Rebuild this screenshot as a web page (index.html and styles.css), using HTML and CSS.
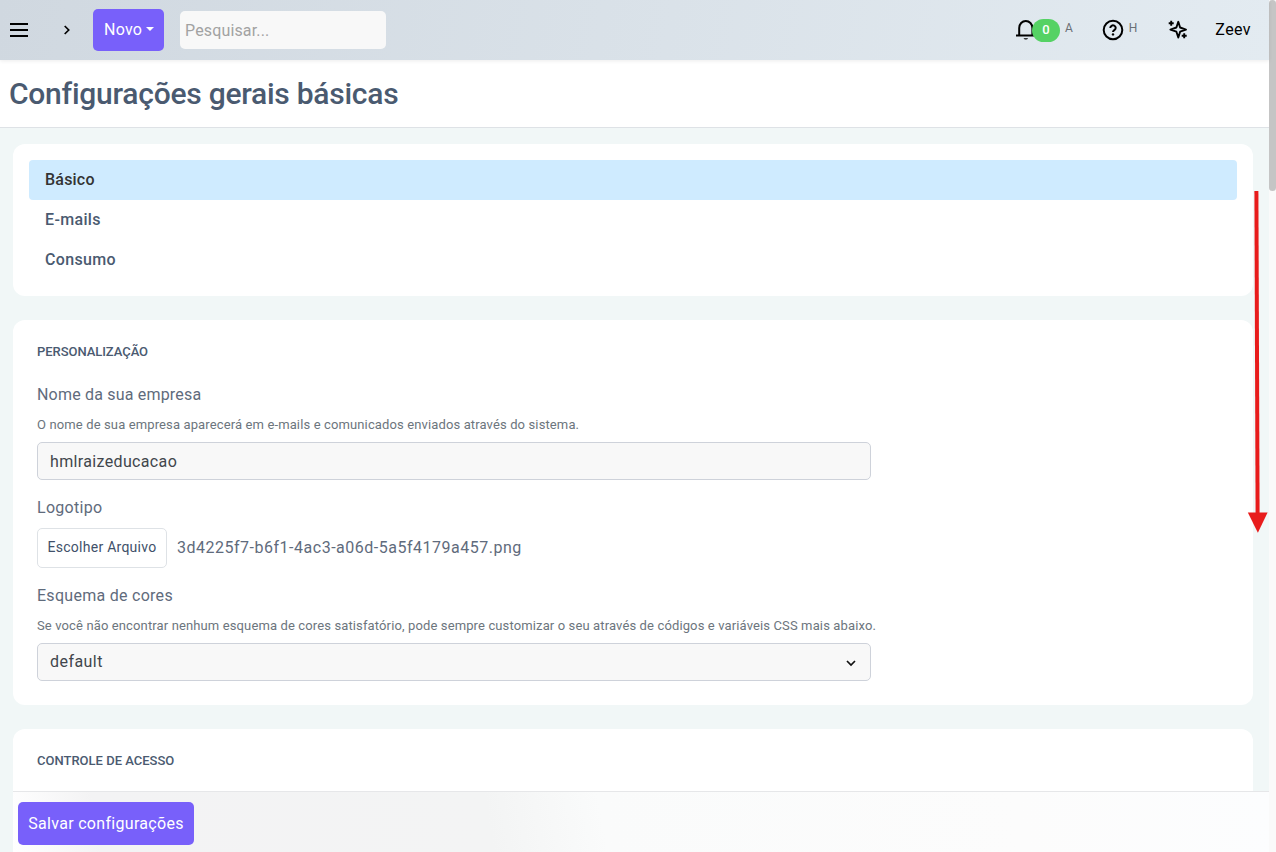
FILE: index.html
```
<!DOCTYPE html>
<html lang="pt-BR">
<head>
<meta charset="utf-8">
<title>Configurações gerais básicas</title>
<link rel="stylesheet" href="styles.css">
</head>
<body>
<div class="window">
  <div class="app">
    <header class="topbar">
      <svg class="menu-icon" width="20" height="16" viewBox="0 0 20 16"><path d="M1 2h18M1 8h18M1 14h18"/></svg>
      <svg class="expand-icon" width="8" height="12" viewBox="0 0 8 12"><path d="M1.7 2l4 4-4 4"/></svg>
      <button class="btn btn-new">Novo<span class="caret"></span></button>
      <input class="search" type="text" placeholder="Pesquisar...">
      <div class="topbar-right">
        <div class="alerts">
          <svg class="icon" width="20" height="22" viewBox="0 0 20 22"><path d="M0 16.5h20M3.2 16.2V9a6.6 7 0 0 1 13.2 0v7.2"/><path d="M7.5 19.3a2.5 2 0 0 0 4.6 0z" fill="#000" stroke="none"/></svg>
          <span class="badge">0</span>
          <span class="hotkey">A</span>
        </div>
        <div class="help">
          <svg class="icon" width="22" height="22" viewBox="0 0 22 22"><circle cx="11" cy="11" r="9.3"/><path d="M8.3 8.9a2.7 2.5 0 1 1 4.3 2c-1 .7-1.6 1.1-1.6 2.1"/><circle cx="11" cy="15.4" r="1.2" fill="#000" stroke="none"/></svg>
          <span class="hotkey">H</span>
        </div>
        <svg class="icon sparkle" width="20" height="20" viewBox="0 0 20 20"><path d="M10.3 1.8l1.8 5.7 5.9 2.1-5.9 2.1-1.8 5.8-1.9-5.8-6-2.1 6-2.1z"/><path d="M3.2.7v5M.7 3.2h5M16.2 13.2v5M13.7 15.7h5"/></svg>
        <span class="user">Zeev</span>
      </div>
    </header>
    <div class="page-head"><h1>Configurações gerais básicas</h1></div>
    <main class="content">
      <nav class="card tabs">
        <a class="tab active">Básico</a>
        <a class="tab">E-mails</a>
        <a class="tab">Consumo</a>
      </nav>
      <section class="card panel">
        <h2>PERSONALIZAÇÃO</h2>
        <div class="field">
          <label class="label-name">Nome da sua empresa</label>
          <p class="hint">O nome de sua empresa aparecerá em e-mails e comunicados enviados através do sistema.</p>
          <div class="control">hmlraizeducacao</div>
        </div>
        <div class="field">
          <label>Logotipo</label>
          <div class="file"><button class="btn-file">Escolher Arquivo</button><span class="file-name">3d4225f7-b6f1-4ac3-a06d-5a5f4179a457.png</span></div>
        </div>
        <div class="field">
          <label>Esquema de cores</label>
          <p class="hint">Se você não encontrar nenhum esquema de cores satisfatório, pode sempre customizar o seu através de códigos e variáveis CSS mais abaixo.</p>
          <div class="control select">default<svg width="12" height="8" viewBox="0 0 12 8"><path d="M2 2l4 4 4-4"/></svg></div>
        </div>
      </section>
      <section class="card panel panel-access">
        <h2>CONTROLE DE ACESSO</h2>
      </section>
    </main>
    <footer class="actions"><button class="btn btn-save">Salvar configurações</button></footer>
  </div>
  <div class="scrollbar"><div class="thumb"></div></div>
</div>
<svg class="scroll-arrow" width="22" height="342" viewBox="0 0 22 342"><path d="M9.4 0L10.6 324" stroke="#e81c1c" stroke-width="4"/><path d="M.8 321.5h19.8l-9.7 20.3z" fill="#e81c1c"/></svg>
</body>
</html>
```
FILE: styles.css
```
* { box-sizing: border-box; }
body { margin: 0; font-family: Roboto, "Liberation Sans", sans-serif; font-size: 16px; color: #5f6b7c; overflow: hidden; }
button, input { font-family: inherit; }

.window { display: grid; grid-template-columns: 1fr 7px; height: 852px; }
.app { display: flex; flex-direction: column; height: 852px; min-width: 0; background: #f1f7f7; }
.scrollbar { background: #fafafa; }
.thumb { height: 191px; border-radius: 4px; background: #c5c5c5; }

.topbar { display: flex; align-items: center; height: 60px; flex: none; padding: 0 18px 0 9px; background: linear-gradient(100deg, #d0d8e0, #e3ebf1); box-shadow: 0 1px 4px rgba(0, 0, 0, .08); z-index: 1; }
.menu-icon, .expand-icon, .icon { fill: none; stroke: #000; stroke-width: 2; flex: none; }
.menu-icon { stroke-width: 1.8; }
.expand-icon { margin-left: 34px; stroke-width: 1.7; }
.btn { border: 0; border-radius: 5px; background: #7860fa; color: #fff; font-size: 16px; }
.btn-new { display: flex; align-items: center; width: 71px; height: 42px; margin-left: 22px; padding: 0 0 2px 11px; letter-spacing: .25px; }
.caret { margin-left: 4px; border: 4px solid transparent; border-top-color: #fff; border-bottom: 0; }
.search { width: 206px; height: 38px; margin-left: 16px; padding: 1px 6px 0 5px; border: 0; border-radius: 5px; background: #f8f8f8; font-size: 16px; letter-spacing: .15px; }
.search::placeholder { color: #a2a2a2; opacity: 1; }
.topbar-right { display: flex; align-items: center; margin-left: auto; color: #000; }
.alerts, .help { display: flex; align-items: center; }
.badge { width: 28px; height: 23px; margin-left: -4px; border-radius: 12px; background: #55d264; color: #fff; font-size: 13px; font-weight: 500; line-height: 22px; text-align: center; z-index: 1; }
.hotkey { margin: 0 0 4px 5px; color: #6b7075; font-size: 12px; }
.help { margin-left: 29px; }
.sparkle { margin-left: 31px; stroke-width: 1.9; stroke-linejoin: round; }
.user { margin: 0 0 2px 27px; letter-spacing: .4px; }

.page-head { flex: none; height: 68px; padding: 15px 9px 0; border-bottom: 1px solid #dee2e6; background: #fff; }
h1 { margin: 0; color: #4a5a70; font-size: 30px; font-weight: 500; line-height: 37px; letter-spacing: -.25px; }

.content { display: flex; flex-direction: column; gap: 24px; flex: 1; min-height: 0; padding: 16px 16px 0 13px; overflow: hidden; }
.card { flex: none; border-radius: 12px; background: #fff; }
.tabs { display: flex; flex-direction: column; height: 152px; padding: 16px; }
.tab { height: 40px; padding: 0 16px; border-radius: 4px; color: #4a5a70; font-weight: 500; line-height: 40px; letter-spacing: .35px; }
.tab.active { background: #cfebff; color: #333; letter-spacing: .2px; }
.panel { padding: 24px; }
.panel-access { flex: 1; border-radius: 12px 12px 0 0; }
h2 { margin: 0; color: #4a5a70; font-size: 13px; font-weight: 500; line-height: 16px; letter-spacing: -.05px; }
.panel-access h2 { letter-spacing: 0; }
.field { margin-top: 15px; }
h2 + .field { margin-top: 22px; }
label { display: block; padding-top: 1px; line-height: 24px; letter-spacing: .28px; }
.label-name { letter-spacing: .19px; }
.hint { margin: 8px 0; color: #6c757d; font-size: 13px; line-height: 19px; letter-spacing: .127px; white-space: nowrap; }
.control { display: flex; align-items: center; width: 834px; height: 38px; padding: 0 12px; border: 1px solid #ced2da; border-radius: 5px; background: #f8f8f8; color: #41464c; letter-spacing: .35px; }
.select { justify-content: space-between; padding: 0 13px 2px 12px; letter-spacing: .45px; }
.select svg { margin-top: 4px; fill: none; stroke: #111; stroke-width: 1.7; }
.file { display: flex; align-items: center; height: 40px; margin-top: 8px; }
.btn-file { width: 130px; height: 40px; padding: 0 0 2px; border: 1px solid #dee2e6; border-radius: 5px; background: #fff; color: #41516a; font-size: 14px; letter-spacing: .26px; }
.file-name { margin: 0 0 2px 10px; letter-spacing: .51px; }

.actions { display: flex; flex: none; height: 61px; margin-left: 13px; padding: 10px 5px; border-top: 1px solid #e6e7e9; background: linear-gradient(80deg, #fff, #f3f3f4 7%, #f3f4f4 38%, #fafbfb 47%, #fcfcfc 80%, #fcfdfe); }
.btn-save { width: 176px; height: 43px; padding: 0; letter-spacing: .3px; }

/* Annotation drawn over the page, beside the scrollbar */
.scroll-arrow { position: absolute; left: 1247px; top: 191px; }
```
